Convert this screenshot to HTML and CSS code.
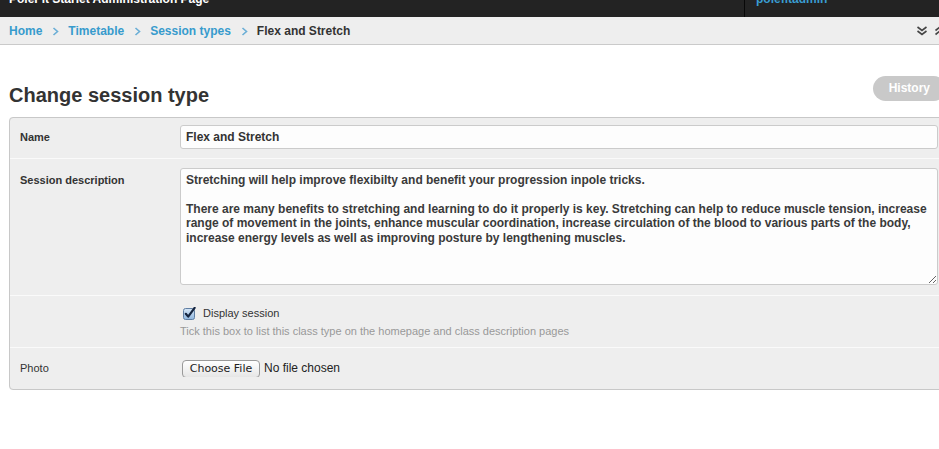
FILE: index.html
```html
<!DOCTYPE html>
<html lang="en">
<head>
<meta charset="utf-8">
<title>Change session type</title>
<link rel="stylesheet" href="styles.css">
</head>
<body>
<div class="page">
  <header class="topbar">
    <div class="branding">PoleFit Starlet Administration Page</div>
    <div class="user"><span class="user-name">polefitadmin</span></div>
  </header>
  <nav class="breadcrumbs">
    <a href="#">Home</a>
    <svg class="sep" width="7" height="9" viewBox="0 0 7 9"><path d="M1.5 1 L5.5 4.5 L1.5 8" fill="none" stroke="#6aaed6" stroke-width="1.6"/></svg>
    <a href="#">Timetable</a>
    <svg class="sep" width="7" height="9" viewBox="0 0 7 9"><path d="M1.5 1 L5.5 4.5 L1.5 8" fill="none" stroke="#6aaed6" stroke-width="1.6"/></svg>
    <a href="#">Session types</a>
    <svg class="sep" width="7" height="9" viewBox="0 0 7 9"><path d="M1.5 1 L5.5 4.5 L1.5 8" fill="none" stroke="#6aaed6" stroke-width="1.6"/></svg>
    <span class="current">Flex and Stretch</span>
    <span class="tools">
      <svg width="12" height="10" viewBox="0 0 12 10"><path d="M1.5 1 L6 4.5 L10.5 1 M1.5 5 L6 8.5 L10.5 5" fill="none" stroke="#444" stroke-width="1.6"/></svg>
      <svg width="12" height="10" viewBox="0 0 12 10"><path d="M1.5 4.5 L6 1 L10.5 4.5 M1.5 8.5 L6 5 L10.5 8.5" fill="none" stroke="#444" stroke-width="1.6"/></svg>
    </span>
  </nav>
  <main class="content">
    <div class="title-row">
      <h1>Change session type</h1>
      <a class="history" href="#">History</a>
    </div>
    <form>
      <fieldset class="module">
        <div class="row">
          <label class="label strong" for="name">Name</label>
          <div class="field">
            <input id="name" class="text-input" type="text" value="Flex and Stretch">
          </div>
        </div>
        <div class="row row-desc">
          <label class="label strong" for="desc">Session description</label>
          <div class="field">
            <textarea id="desc" class="text-area" wrap="off">Stretching will help improve flexibilty and benefit your progression inpole tricks.

There are many benefits to stretching and learning to do it properly is key. Stretching can help to reduce muscle tension, increase
range of movement in the joints, enhance muscular coordination, increase circulation of the blood to various parts of the body,
increase energy levels as well as improving posture by lengthening muscles.</textarea>
          </div>
        </div>
        <div class="row row-check">
          <div class="label"></div>
          <div class="field">
            <div class="check-line">
              <svg class="checkbox" width="13" height="13" viewBox="0 0 13 13">
                <defs>
                  <linearGradient id="cbg" x1="0" y1="0" x2="0" y2="1">
                    <stop offset="0" stop-color="#d6e6f6"/>
                    <stop offset="1" stop-color="#8fb6df"/>
                  </linearGradient>
                </defs>
                <rect x="0.5" y="1.5" width="11" height="11" rx="2" fill="url(#cbg)" stroke="#5f7ea3"/>
                <path d="M2.8 6.8 L5.2 9.6 L11.6 0.8" fill="none" stroke="#152540" stroke-width="2.2" stroke-linecap="round" stroke-linejoin="round"/>
              </svg>
              <span class="check-text">Display session</span>
            </div>
            <p class="help">Tick this box to list this class type on the homepage and class description pages</p>
          </div>
        </div>
        <div class="row row-photo">
          <label class="label" for="photo">Photo</label>
          <div class="field">
            <input id="photo" class="file-input" type="file">
          </div>
        </div>
      </fieldset>
    </form>
  </main>
</div>
</body>
</html>
```

FILE: styles.css
```css
html {
  overflow: hidden;
}

body {
  margin: 0;
  background: #fff;
  font-family: "Liberation Sans", Arial, Helvetica, sans-serif;
  color: #333;
}

.page {
  width: 957px;
}

.topbar {
  display: flex;
  height: 17px;
  overflow: hidden;
  background: #232323;
}

.branding {
  flex: 1;
  padding-left: 9px;
  margin-top: -8px;
  font-size: 12px;
  font-weight: bold;
  line-height: 14px;
  color: #fff;
}

.user {
  width: 201px;
  padding-left: 11px;
  border-left: 1px solid #080808;
}

.user-name {
  display: block;
  margin-top: -8px;
  font-size: 12px;
  font-weight: bold;
  line-height: 14px;
  color: #3a9dd2;
}

.breadcrumbs {
  display: flex;
  align-items: center;
  box-sizing: border-box;
  height: 28px;
  padding: 1px 11px 0 9px;
  background: #eee;
  border-bottom: 1px solid #cacaca;
  font-size: 12px;
  font-weight: bold;
  line-height: 26px;
}

.breadcrumbs a {
  color: #379bcd;
  text-decoration: none;
}

.breadcrumbs .sep {
  margin: 0 9px 0 10px;
}

.breadcrumbs .current {
  color: #333;
}

.tools {
  margin-left: auto;
  display: flex;
  gap: 6px;
  align-items: center;
}

.content {
  padding: 0 9px;
}

.title-row {
  display: flex;
  justify-content: space-between;
  align-items: flex-start;
  padding-top: 31px;
}

.title-row h1 {
  margin: 7px 0 0;
  font-size: 20px;
  line-height: 24px;
  font-weight: bold;
  color: #333;
}

.history {
  display: block;
  height: 25px;
  margin-right: 2px;
  padding: 0 16px;
  border-radius: 13px;
  background: #c9c9c9;
  color: #fff;
  font-size: 12px;
  font-weight: bold;
  line-height: 25px;
  text-decoration: none;
}

form {
  margin: 10px 0 0;
}

.module {
  margin: 0;
  padding: 0;
  min-width: 0;
  border: 1px solid #c8c8c8;
  border-radius: 4px;
  background: #eee;
}

.row {
  display: flex;
  padding: 7px 0 9px;
  border-top: 1px solid #fafafa;
}

.row:first-child {
  border-top: none;
}

.label {
  width: 160px;
  padding-left: 10px;
  flex: none;
  font-size: 11px;
  line-height: 24px;
  color: #333;
}

.label.strong {
  font-weight: bold;
}

.field {
  flex: 1;
  padding-right: 9px;
  min-width: 0;
}

.text-input {
  display: block;
  box-sizing: border-box;
  width: 100%;
  height: 24px;
  margin: 0;
  padding: 0 5px;
  border: 1px solid #cbcbcb;
  border-radius: 3px;
  background: #fdfdfd;
  font-family: "Liberation Sans", Arial, sans-serif;
  font-size: 12px;
  font-weight: bold;
  color: #333;
  outline: none;
}

.row-desc {
  padding: 9px 0 10px;
}

.text-area {
  display: block;
  box-sizing: border-box;
  width: 100%;
  height: 117px;
  margin: 0;
  padding: 4px 5px;
  border: 1px solid #cbcbcb;
  border-radius: 3px;
  background: #fdfdfd;
  font-family: "Liberation Sans", Arial, sans-serif;
  font-size: 12px;
  font-weight: bold;
  line-height: 14.4px;
  color: #3a3a3a;
  overflow: hidden;
  outline: none;
}

.row-check {
  padding: 9px 0 9px;
}

.check-line {
  display: flex;
  align-items: center;
  height: 16px;
  padding-left: 3px;
}

.checkbox {
  display: block;
  flex: none;
}

.check-text {
  margin-left: 7px;
  font-size: 11px;
  color: #333;
}

.help {
  margin: 3px 0 0;
  font-size: 11px;
  line-height: 14px;
  color: #999;
}

.row-photo {
  padding: 11px 0 12px;
}

.row-photo .label {
  line-height: 18px;
}

.file-input {
  display: block;
  height: 18px;
  margin: 0 0 0 2px;
  padding: 0;
  font-family: "Liberation Sans", Arial, sans-serif;
  font-size: 12px;
  line-height: 18px;
  color: #222;
}

.file-input::file-selector-button {
  box-sizing: border-box;
  width: 78px;
  height: 18px;
  margin: 0 4px 0 0;
  padding: 0;
  border: 1px solid #9a9a9a;
  border-radius: 4px;
  background: linear-gradient(#ffffff, #e6e6e6);
  font-family: "DejaVu Sans", "Liberation Sans", sans-serif;
  font-size: 11px;
  color: #222;
}
```
